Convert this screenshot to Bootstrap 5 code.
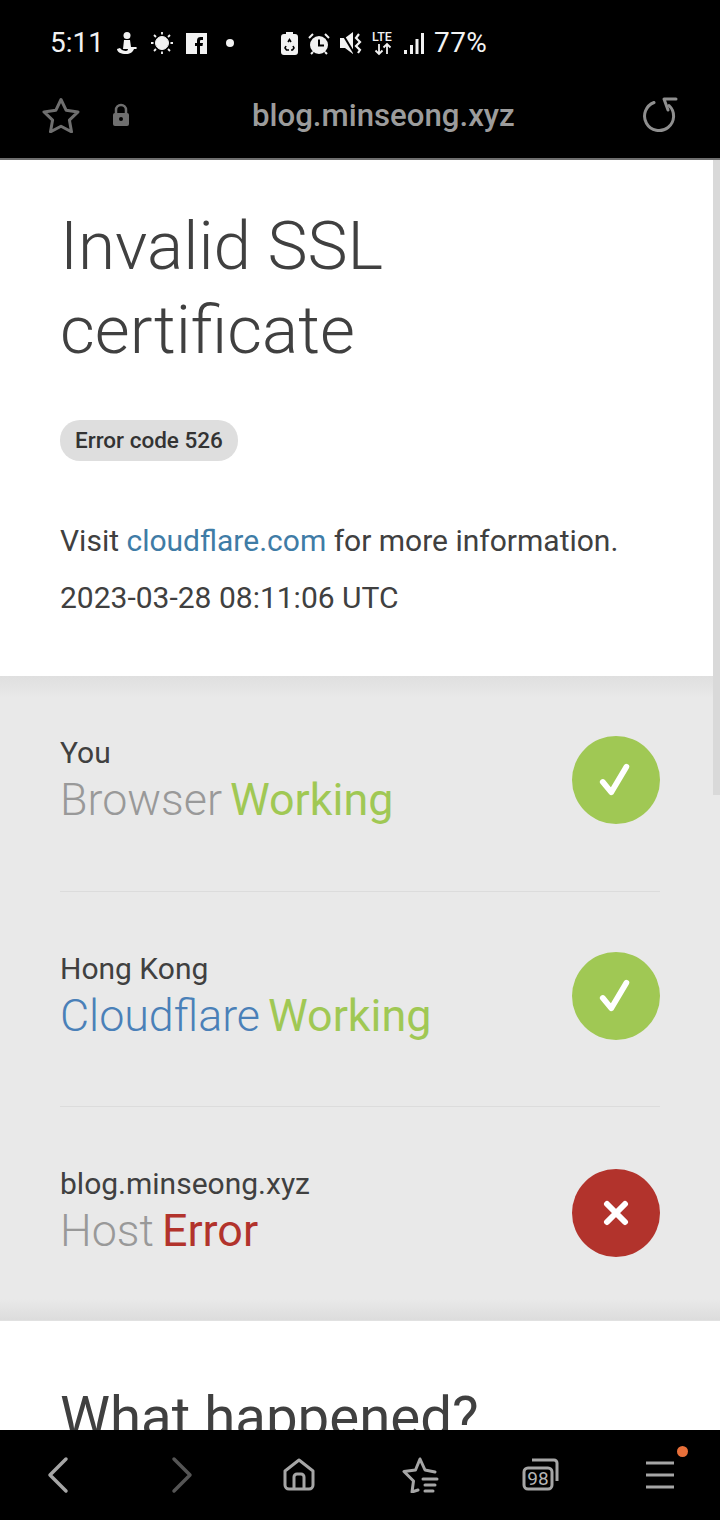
<!DOCTYPE html>
<html lang="en">
<head>
    <meta charset="UTF-8">
    <title>Invalid SSL certificate</title>
    <meta name="viewport" content="width=device-width, initial-scale=1">
    <link href="https://cdn.jsdelivr.net/npm/bootstrap@5.3.3/dist/css/bootstrap.min.css" rel="stylesheet">
    <style>
        html, body { height: 1520px; overflow: hidden; }
        body { font-family: Roboto, "Liberation Sans", sans-serif; color: #404040; background: #fff; }
        .phone { height: 1520px; width: 720px; }

        .status-bar { height: 82px; background: #000; color: #f2f2f2; font-size: 28px; padding-left: 50px; }
        .status-time { width: 66px; line-height: 1; }
        .status-pct { line-height: 1; letter-spacing: .4px; margin-left: 10px; }
        .notif-icons { gap: 13px; }
        .notif-dot { margin-left: 18px; }
        .sys-icons { gap: 10px; margin-left: 46px; }
        .url-bar { height: 78px; background: #000; border-bottom: 2px solid #6e6e6e; padding: 0 41px 0 42px; }
        .url-text { color: #9c9c9c; font-size: 31.2px; font-weight: 500; left: 252px; top: 14px; line-height: 40px; }
        .url-row { height: 66px; }
        .url-lock { margin-left: 32px; }

        .page-view { flex: 1 1 0; overflow: hidden; }
        .page-scroll { right: 0; top: 0; width: 7px; height: 635px; background: #d9d9d9; }

        .intro { height: 516px; padding: 44px 60px 0; }
        .intro h1 { font-size: 67.5px; font-weight: 300; line-height: 84px; margin: 0 0 48px; color: #404040; }
        .err-pill { background: #dedede; border-radius: 20px; height: 41px; line-height: 41px; padding: 0 15px; font-size: 22.5px; font-weight: 500; color: #333; }
        .intro p { font-size: 30px; line-height: 42px; margin: 0; }
        .visit { margin-top: 59px !important; }
        .stamp { margin-top: 15px !important; }
        .intro a { color: #3f7ca6; text-decoration: none; }

        .status-band { height: 645px; padding: 0 60px; background: linear-gradient(#dfdfdf 0, #e9e9e9 22px, #e9e9e9 623px, #dcdcdc 644px, #e6e6e6 645px); }
        .hop { height: 215.5px; border-bottom: 1px solid #dcdcdc; }
        .hop:last-child { border-bottom: 0; }
        .hop:not(:last-child) .hop-text { padding-top: 2px; }
        .hop-place { font-size: 30px; line-height: 32px; }
        .hop-line { font-size: 44.8px; font-weight: 300; line-height: 62px; color: #999; }
        .hop-line b { font-weight: 400; }
        .hop-line .gap { margin-left: 8px; }
        .c-ok { color: #a0c854; }
        .c-blue { color: #4a80b8; }
        .c-bad { color: #b2332c; }
        .hop-dot { width: 88px; height: 88px; border-radius: 50%; margin-bottom: 6px; }
        .hop:last-child .hop-dot { margin-bottom: 4px; }
        .dot-ok { background: #a0c854; }
        .dot-bad { background: #b2332c; }

        .next-sec { height: 109px; padding: 60px 60px 0; overflow: hidden; }
        .next-sec h2 { font-size: 56.4px; font-weight: 400; line-height: 72px; margin: 0; color: #404040; }

        .bottom-bar { height: 90px; background: #000; padding: 0 42px; }
        .nav-dot { width: 11px; height: 11px; border-radius: 50%; background: #e8703a; right: 32px; top: 16px; }
    </style>
</head>
<body>
<div class="phone d-flex flex-column position-relative">

    <!-- status bar -->
    <div class="status-bar d-flex align-items-center pt-1">
        <span class="status-time">5:11</span>
        <div class="notif-icons d-flex align-items-center">
            <svg width="22" height="24" viewBox="0 0 22 24" fill="#f2f2f2"><circle cx="11" cy="4.500" r="3.500"/><path d="M8 9h6l1 7h5c1 0 1 2 0 2h-2c-1 3-4 5-8 5-5 0-9-2-9-5l3-1c1 2 4 3 6 3 1 0 2-1 2-2H7z"/></svg>
            <svg width="22" height="24" viewBox="0 0 22 24" fill="#f2f2f2" stroke="#f2f2f2"><circle cx="11" cy="12" r="6.500"/><path stroke-width="1.800" d="M11 1v2.500M11 20.500V23M0 12h2.500M19.500 12H22M3 4l2 2M17 18l2 2M3 20l2-2M17 6l2-2"/></svg>
            <svg width="21" height="21" viewBox="0 0 21 21"><rect width="21" height="21" fill="#f2f2f2"/><path fill="#000" d="M11 21v-8H9V10h2V7.500C11 5 12.500 4 14.500 4H17v3h-1.500c-1 0-1.500.4-1.500 1.300V10h3l-.5 3H14v8z"/></svg>
        </div>
        <svg class="notif-dot" width="10" height="10" viewBox="0 0 10 10"><circle cx="5" cy="5" r="4" fill="#f2f2f2"/></svg>
        <div class="sys-icons d-flex align-items-center">
            <svg width="17" height="23" viewBox="0 0 17 23"><path fill="#f2f2f2" d="M5 0h7v2h2a3 3 0 0 1 3 3v15a3 3 0 0 1-3 3H3a3 3 0 0 1-3-3V5a3 3 0 0 1 3-3h2z"/><path fill="none" stroke="#000" stroke-width="1.600" d="M7 10l1.500-2.500L10 10M5 14l-1 2 1.500 2H8M12 14l1 2-1.500 2H10"/></svg>
            <svg width="22" height="23" viewBox="0 0 22 23"><circle cx="11" cy="13" r="9" fill="#f2f2f2"/><path fill="none" stroke="#000" stroke-width="2" d="M11 7.500V13.500h5"/><path stroke="#f2f2f2" stroke-width="2" d="M1 6l4-4M21 6l-4-4M5 20l-2 2M17 20l2 2"/></svg>
            <svg width="22" height="24" viewBox="0 0 22 24"><path fill="#f2f2f2" d="M0 7h5l8-6v22l-8-6H0z"/><path stroke="#000" stroke-width="2" d="M2 2l12 20"/><path stroke="#f2f2f2" stroke-width="2.200" fill="none" d="M19 3l-3 4 4 4-4 4 4 4-2 3"/></svg>
            <svg width="22" height="26" viewBox="0 0 22 26"><text x="0" y="11" font-size="12.500" font-family="Roboto" font-weight="500" fill="#f2f2f2">LTE</text><path stroke="#f2f2f2" stroke-width="1.800" fill="none" d="M7 14v10M3.500 20.500L7 24l3.500-3.500M15 24V14M11.500 17.500L15 14l3.500 3.500"/></svg>
            <svg width="20" height="24" viewBox="0 0 20 24" fill="#f2f2f2"><rect x="0" y="19" width="3" height="4"/><rect x="6" y="14" width="3" height="9"/><rect x="11.500" y="8" width="3" height="15"/><rect x="17" y="2" width="3" height="21"/></svg>
        </div>
        <span class="status-pct">77%</span>
    </div>

    <!-- url bar -->
    <div class="url-bar position-relative">
        <div class="url-row d-flex align-items-center justify-content-between">
            <div class="d-flex align-items-center">
                <svg width="38" height="36" viewBox="0 0 38 36" fill="none" stroke="#6f6f6f" stroke-width="3" stroke-linejoin="round"><path d="M19 2.500l5.200 10.800 11.800 1.600-8.600 8.200 2.100 11.700L19 29.200 8.500 34.800l2.100-11.700L2 14.900l11.800-1.600z"/></svg>
                <svg class="url-lock" width="18" height="24" viewBox="0 0 18 24"><path fill="none" stroke="#6f6f6f" stroke-width="2.500" d="M4 11V7a5 5 0 0 1 10 0v4"/><rect x="1" y="10" width="16" height="13" rx="2" fill="#6f6f6f"/><circle cx="9" cy="16" r="2" fill="#000"/></svg>
            </div>
            <svg width="36" height="36" viewBox="0 0 36 36" fill="none" stroke="#8f8f8f" stroke-width="3" stroke-linecap="round" stroke-linejoin="round"><path d="M11 5.500A14.500 14.500 0 1 0 26 8.500"/><path d="M33 2H21l4 11"/></svg>
        </div>
        <span class="url-text position-absolute">blog.minseong.xyz</span>
    </div>

    <!-- page content -->
    <div class="page-view position-relative">
        <section class="intro">
            <h1>Invalid SSL<br>certificate</h1>
            <span class="err-pill d-inline-block">Error code 526</span>
            <p class="visit">Visit <a href="#">cloudflare.com</a> for more information.</p>
            <p class="stamp">2023-03-28 08:11:06 UTC</p>
        </section>

        <section class="status-band">
            <div class="hop d-flex align-items-center justify-content-between">
                <div class="hop-text">
                    <div class="hop-place">You</div>
                    <div class="hop-line">Browser<b class="c-ok gap">Working</b></div>
                </div>
                <div class="hop-dot dot-ok d-flex align-items-center justify-content-center">
                    <svg width="36" height="36" viewBox="0 0 38 38" fill="none" stroke="#fff" stroke-width="6" stroke-linecap="round" stroke-linejoin="round"><path d="M5 21l9 11L30 5"/></svg>
                </div>
            </div>
            <div class="hop d-flex align-items-center justify-content-between">
                <div class="hop-text">
                    <div class="hop-place">Hong Kong</div>
                    <div class="hop-line"><span class="c-blue">Cloudflare</span><b class="c-ok gap">Working</b></div>
                </div>
                <div class="hop-dot dot-ok d-flex align-items-center justify-content-center">
                    <svg width="36" height="36" viewBox="0 0 38 38" fill="none" stroke="#fff" stroke-width="6" stroke-linecap="round" stroke-linejoin="round"><path d="M5 21l9 11L30 5"/></svg>
                </div>
            </div>
            <div class="hop d-flex align-items-center justify-content-between">
                <div class="hop-text">
                    <div class="hop-place">blog.minseong.xyz</div>
                    <div class="hop-line">Host<b class="c-bad gap">Error</b></div>
                </div>
                <div class="hop-dot dot-bad d-flex align-items-center justify-content-center">
                    <svg width="26" height="26" viewBox="0 0 26 26" stroke="#fff" stroke-width="6" stroke-linecap="round"><path d="M4 4l18 18M22 4L4 22"/></svg>
                </div>
            </div>
        </section>

        <section class="next-sec">
            <h2>What happened?</h2>
        </section>

        <div class="page-scroll position-absolute"></div>
    </div>

    <!-- bottom nav -->
    <div class="bottom-bar d-flex align-items-center justify-content-between position-relative">
        <svg width="36" height="38" viewBox="0 0 36 38" fill="none" stroke="#a6a6a6" stroke-width="3.500" stroke-linecap="round" stroke-linejoin="round"><path d="M24 3L8 19l16 16"/></svg>
        <svg width="36" height="38" viewBox="0 0 36 38" fill="none" stroke="#555" stroke-width="3.500" stroke-linecap="round" stroke-linejoin="round"><path d="M12 3l16 16-16 16"/></svg>
        <svg width="36" height="36" viewBox="0 0 36 36" fill="none" stroke="#a6a6a6" stroke-width="3" stroke-linejoin="round"><path d="M4 14L18 3l14 11v14a4 4 0 0 1-4 4H8a4 4 0 0 1-4-4z"/><path d="M13 32V20a3 3 0 0 1 3-3h4a3 3 0 0 1 3 3v12"/></svg>
        <svg width="38" height="36" viewBox="0 0 38 36" fill="none" stroke="#a6a6a6" stroke-width="3" stroke-linejoin="round" stroke-linecap="round"><path d="M17 33l-6 2 1.500-11L3 14.500l11.500-1.500L19 2l5 11 10 2"/><path d="M22 22h14M24 28h10M24 34h8"/></svg>
        <svg width="38" height="34" viewBox="0 0 38 34" fill="none" stroke="#a6a6a6" stroke-width="3" stroke-linejoin="round"><path d="M10 2h22a3 3 0 0 1 3 3v18"/><rect x="2" y="10" width="28" height="21" rx="4"/><text x="16" y="27" text-anchor="middle" font-size="19" font-family="Roboto" fill="#b5b5b5" stroke="none">98</text></svg>
        <svg width="34" height="32" viewBox="0 0 34 32" stroke="#a6a6a6" stroke-width="3"><path d="M2 4h28M2 16h28M2 28h28"/></svg>
        <span class="nav-dot position-absolute"></span>
    </div>
</div>
<script src="https://cdn.jsdelivr.net/npm/bootstrap@5.3.3/dist/js/bootstrap.bundle.min.js"></script>
</body>
</html>
